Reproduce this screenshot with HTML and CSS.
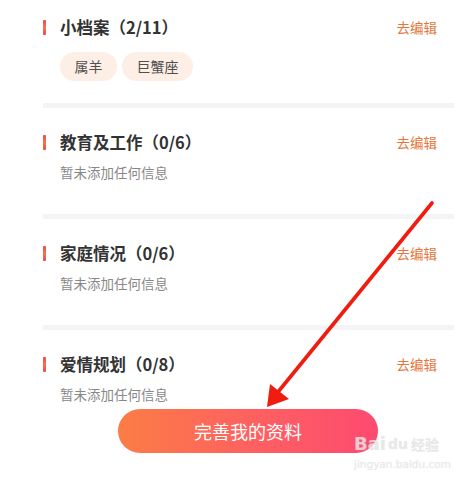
FILE: index.html
```html
<!DOCTYPE html>
<html lang="zh">
<head>
<meta charset="utf-8">
<link rel="stylesheet" href="styles.css">
</head>
<body>
<div class="page">
  <section class="card card-first">
    <div class="head">
      <span class="bar"></span>
      <h2 class="title">小档案（2/11）</h2>
      <a class="edit">去编辑</a>
    </div>
    <div class="tags">
      <span class="tag">属羊</span>
      <span class="tag">巨蟹座</span>
    </div>
  </section>
  <div class="sep"></div>
  <section class="card">
    <div class="head">
      <span class="bar"></span>
      <h2 class="title">教育及工作（0/6）</h2>
      <a class="edit">去编辑</a>
    </div>
    <p class="empty">暂未添加任何信息</p>
  </section>
  <div class="sep"></div>
  <section class="card">
    <div class="head">
      <span class="bar"></span>
      <h2 class="title">家庭情况（0/6）</h2>
      <a class="edit">去编辑</a>
    </div>
    <p class="empty">暂未添加任何信息</p>
  </section>
  <div class="sep"></div>
  <section class="card">
    <div class="head">
      <span class="bar"></span>
      <h2 class="title">爱情规划（0/8）</h2>
      <a class="edit">去编辑</a>
    </div>
    <p class="empty">暂未添加任何信息</p>
  </section>
</div>

<button class="cta">完善我的资料</button>

<svg class="arrow" width="471" height="483" viewBox="0 0 471 483">
  <line x1="432" y1="203" x2="278" y2="392" stroke="#f01c10" stroke-width="3.6" stroke-linecap="round"/>
  <polygon points="267,407 270,384 289,399" fill="#f01c10"/>
</svg>

<div class="watermark">
  <div class="wm-top"><span class="wm-bai">Bai</span><span class="wm-du">du</span><span class="wm-cn">经验</span></div>
  <div class="wm-url">jingyan.baidu.com</div>
</div>
</body>
</html>
```

FILE: styles.css
```css
* { box-sizing: border-box; }
html, body {
  margin: 0;
  padding: 0;
  background: #fff;
  font-family: "Noto Sans CJK SC", "Noto Sans", sans-serif;
}
body {
  width: 471px;
  height: 483px;
  overflow: hidden;
  position: relative;
}
.page {
  margin-left: 43px;
  width: 411px;
}
.card {
  padding: 23px 17px 32px 0;
}
.card-first {
  padding-top: 16px;
  padding-bottom: 22px;
}
.sep {
  height: 5px;
  background: #f4f4f4;
}
.head {
  display: flex;
  align-items: center;
  height: 22px;
}
.bar {
  width: 3px;
  height: 15px;
  border-radius: 1px;
  background: linear-gradient(180deg, #f2474a, #f7744e 50%, #f2474a);
  margin-right: 14px;
}
.title {
  margin: 0;
  flex: 1;
  font-size: 16.5px;
  font-weight: 700;
  color: #333;
  line-height: 22px;
}
.edit {
  font-size: 13.5px;
  color: #e4763b;
  line-height: 22px;
}
.tags {
  display: flex;
  gap: 5px;
  margin: 14px 0 0 17px;
}
.tag {
  height: 29px;
  line-height: 29px;
  padding: 0 14.5px;
  border-radius: 15px;
  background: #fdeee6;
  color: #4f4f4f;
  font-size: 14px;
}
.empty {
  margin: 9px 0 0 17px;
  font-size: 13.5px;
  line-height: 20px;
  color: #888;
}
.cta {
  position: absolute;
  left: 118px;
  top: 409px;
  width: 260px;
  height: 44px;
  border: 0;
  border-radius: 22px;
  background: linear-gradient(90deg, #fb7d45, #fe5f62 55%, #fd4a70);
  color: #fff;
  font-family: "Noto Sans CJK SC", sans-serif;
  font-size: 18px;
  padding: 0;
  line-height: 44px;
}
.arrow {
  position: absolute;
  left: 0;
  top: 0;
  pointer-events: none;
}
.watermark {
  position: absolute;
  left: 354px;
  top: 435px;
  color: rgba(232, 232, 232, 0.7);
  text-shadow: 0 0 1px rgba(210, 210, 210, 0.5);
  font-family: "DejaVu Sans", sans-serif;
}
.wm-top {
  display: flex;
  align-items: flex-end;
  line-height: 18px;
}
.wm-bai { font-size: 18px; font-weight: 700; }
.wm-du {
  font-size: 14px;
  font-weight: 700;
  margin-left: 2px;
}
.wm-cn {
  font-family: "Noto Sans CJK SC", sans-serif;
  font-size: 14px;
  font-weight: 700;
  margin-left: 3px;
}
.wm-url {
  font-size: 10.5px;
  line-height: 14px;
  margin-top: 4px;
}
```
